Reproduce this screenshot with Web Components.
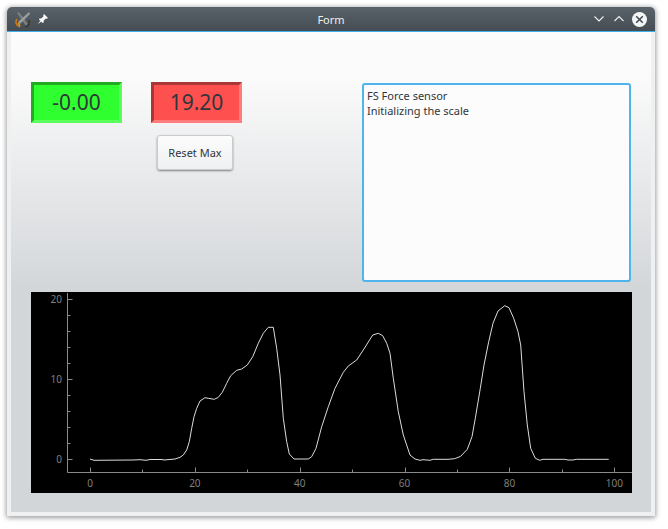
<!DOCTYPE html>
<html>
<head>
<meta charset="utf-8">
<title>Form</title>
<style>
  html, body { margin: 0; padding: 0; background: #fff; height: 100%; overflow: hidden; }
  body { padding: 7px 0 0 7px; box-sizing: border-box; font-family: "Noto Sans", sans-serif; }
</style>
</head>
<body>
<form-window title-text="Form">
  <form-panel>
    <value-display slot="first" color="green">-0.00</value-display>
    <value-display slot="second" color="red">19.20</value-display>
    <push-button slot="action">Reset Max</push-button>
    <log-view slot="log">FS Force sensor
Initializing the scale</log-view>
    <force-plot slot="plot"></force-plot>
  </form-panel>
</form-window>

<script>
class FormWindow extends HTMLElement {
  connectedCallback() {
    const title = this.getAttribute('title-text') || '';
    this.attachShadow({ mode: 'open' }).innerHTML = `
      <style>
        :host {
          display: block;
          width: 648px;
          height: 509px;
          border-radius: 5px 5px 2px 2px;
          box-shadow: 0 1px 5px 1px rgba(0, 0, 0, 0.38);
        }
        /* the reference text is grayscale antialiased, a group opacity gets us that */
        .frame { display: flex; flex-direction: column; height: 100%; border-radius: inherit; overflow: hidden; opacity: 0.999; }
        .bar {
          flex: none;
          height: 24px;
          display: grid;
          grid-template-columns: 1fr auto 1fr;
          align-items: center;
          background: linear-gradient(#5a636a, #454c53);
          border-bottom: 1px solid #3daee9;
          color: #eff0f1;
          font-size: 11px;
        }
        .left { display: flex; align-items: center; gap: 6px; padding-left: 8px; }
        .right { display: flex; align-items: center; justify-content: flex-end; gap: 7px; padding-right: 8px; }
        .down { margin-right: 1px; }
        svg { display: block; }
        .body { flex: 1; min-height: 0; padding: 0 4px 4px; background: #eff0f1; }
      </style>
      <div class="frame">
        <div class="bar">
          <div class="left">
            <svg width="16" height="17" viewBox="0 0 16 17">
              <path d="M2 2 L4 1 L13 13 L11 15Z" fill="#7b7f80"/>
              <path d="M14 1 L15 3 L5 13 L3 11Z" fill="#9a9e9f"/>
              <path d="M2 8 C0 11 1 15 5 16" fill="none" stroke="#c97a18" stroke-width="1.6"/>
              <path d="M14 9 C15 12 14 15 10 16" fill="none" stroke="#3b3a30" stroke-width="1.8"/>
              <path d="M3 12 L5 15" stroke="#e0a020" stroke-width="1.4"/>
            </svg>
            <svg width="12" height="12" viewBox="0 0 12 12">
              <path d="M7 1 L11 5 L9.6 5.8 L8.8 5.4 L6.6 7.8 L6.6 9.6 L5.6 10 L2 6.4 L2.4 5.4 L4.2 5.4 L6.6 3.2 L6.2 2.4Z M3.4 7.6 L1 11 L4.4 8.6Z" fill="#fcfcfc"/>
            </svg>
          </div>
          <div class="title">${title}</div>
          <div class="right">
            <svg class="down" width="12" height="12" viewBox="0 0 12 12"><path d="M1.5 3.5 L6 8 L10.5 3.5" fill="none" stroke="#eff0f1" stroke-width="1.1"/></svg>
            <svg width="12" height="12" viewBox="0 0 12 12"><path d="M1.5 8 L6 3.5 L10.5 8" fill="none" stroke="#eff0f1" stroke-width="1.1"/></svg>
            <svg width="15" height="15" viewBox="0 0 15 15">
              <circle cx="7.5" cy="7.5" r="7.5" fill="#f4f5f5"/>
              <path d="M4.2 4.2 L10.8 10.8 M10.8 4.2 L4.2 10.8" stroke="#454c53" stroke-width="1.6"/>
            </svg>
          </div>
        </div>
        <div class="body"><slot></slot></div>
      </div>`;
  }
}

class FormPanel extends HTMLElement {
  connectedCallback() {
    this.attachShadow({ mode: 'open' }).innerHTML = `
      <style>
        :host {
          display: block;
          height: 100%;
          box-sizing: border-box;
          padding: 50px 19px 19px 20px;
          background: linear-gradient(#fcfcfc 0, #fafafa 50px, #d3d6d9 258px, #d3d6d9 100%);
        }
        .top {
          display: grid;
          grid-template-columns: 91px 91px 269px;
          column-gap: 29px;
          height: 210px;
        }
        .middle { display: flex; flex-direction: column; gap: 12px; align-items: flex-start; }
        .log { margin-left: 91px; margin-top: 1px; }
      </style>
      <div class="top">
        <div><slot name="first"></slot></div>
        <div class="middle"><slot name="second"></slot><slot name="action"></slot></div>
        <div class="log"><slot name="log"></slot></div>
      </div>
      <slot name="plot"></slot>`;
  }
}

class ValueDisplay extends HTMLElement {
  connectedCallback() {
    const colors = {
      green: ['#2fff2f', '#22ab22', '#5cff5c'],
      red: ['#ff5050', '#aa3636', '#ff7c7c']
    };
    const c = colors[this.getAttribute('color')] || colors.green;
    this.attachShadow({ mode: 'open' }).innerHTML = `
      <style>
        :host {
          display: flex;
          align-items: center;
          justify-content: center;
          box-sizing: border-box;
          width: 91px;
          height: 41px;
          background: ${c[0]};
          border: 3px solid;
          border-color: ${c[1]} ${c[2]} ${c[2]} ${c[1]};
          color: #31363b;
          font-size: 21px;
          line-height: 1;
        }
      </style>
      <slot></slot>`;
  }
}

class PushButton extends HTMLElement {
  connectedCallback() {
    this.attachShadow({ mode: 'open' }).innerHTML = `
      <style>
        :host {
          display: flex;
          align-items: center;
          justify-content: center;
          box-sizing: border-box;
          width: 76px;
          height: 35px;
          margin-left: 6px;
          background: linear-gradient(#fcfcfc, #eff0f1);
          border: 1px solid #c9cccd;
          border-radius: 3px;
          box-shadow: 0 1px 2px rgba(0, 0, 0, 0.45);
          color: #31363b;
          font-size: 11px;
        }
      </style>
      <slot></slot>`;
  }
}

class LogView extends HTMLElement {
  connectedCallback() {
    this.attachShadow({ mode: 'open' }).innerHTML = `
      <style>
        :host {
          display: block;
          box-sizing: border-box;
          width: 269px;
          height: 199px;
          padding: 3px 3px;
          background: #fcfcfc;
          border: 2px solid #4fb4ec;
          border-radius: 3px;
          color: #31363b;
          font-size: 11px;
          line-height: 15px;
        }
        div { white-space: pre-line; }
      </style>
      <div><slot></slot></div>`;
  }
}

// curve traced in page coordinates, shifted to the plot's corner when drawn
const TRACE = [[90,459],[94,460.3],[133,460],[140,459.7],[146,460.3],[150,459.5],[162,459.5],[164,460],[175,459],
  [180,457.3],[183.3,455],[186.7,450],[189.3,441.7],[191.7,428.3],[194,416.7],[196.7,408.3],[200,401],[205,397.7],
  [208.3,398.3],[214.3,399.3],[218.3,397.3],[222.3,392.3],[226.7,383.3],[230.7,375.7],[236.7,370.3],[241.7,369],
  [247.3,365],[252.7,356.7],[258.3,343.3],[263.3,333.3],[268.3,327.3],[273.3,327.3],[276.7,348.3],[280,375],
  [283.3,418.3],[286.7,441.7],[289.3,454],[294,459],[308.3,459],[311.7,456.7],[316,448.3],[321.7,426.7],
  [328.3,406.7],[335,388.3],[343.3,372.3],[348.3,366],[356.7,360],[363.3,350],[372.7,335],[378.3,333.3],
  [382.7,335.7],[386.7,343.3],[390,353.3],[393.3,378.3],[398.3,411.7],[403.3,435],[410,455],[415,459],
  [420,460.3],[423,459.7],[430,460.3],[433.3,459.3],[448,459.3],[454.7,458.7],[460.7,456.3],[467.3,449.3],
  [472,436.7],[475.3,418.3],[480.3,388.3],[484,365],[488.7,341.7],[493,323.3],[498,311],[504.7,305.7],
  [509,307.7],[513.7,318.3],[518,331.7],[520.7,345],[524,391.7],[527.3,425],[530.7,448.3],[535.3,458.3],
  [539.7,460.3],[543,459.3],[564.7,459.3],[568,460],[573,460],[576.3,459.3],[608.7,459.3]];

class ForcePlot extends HTMLElement {
  connectedCallback() {
    const ox = 31, oy = 292;
    const pts = TRACE.map(p => `${(p[0] - ox).toFixed(1)},${(p[1] - oy).toFixed(1)}`).join(' ');
    const axisX = 36.5, axisY = 180.5;
    const xAt = v => 59 + v * 5.243;
    const yAt = v => 167 - v * 8;
    let ticks = '';
    let labels = '';
    for (let v = 0; v <= 100; v += 10) {
      const x = Math.round(xAt(v)) + 0.5;
      const len = v % 20 === 0 ? 5 : 3;
      ticks += `M${x} ${axisY}V${axisY - len}`;
    }
    for (let v = 0; v <= 20; v += 2) {
      const y = Math.round(yAt(v)) + 0.5;
      const len = v % 10 === 0 ? 5 : 3;
      ticks += `M${axisX} ${y}H${axisX + len}`;
    }
    for (const v of [0, 20, 40, 60, 80, 100]) {
      labels += `<text x="${xAt(v)}" y="195" text-anchor="middle">${v}</text>`;
    }
    for (const v of [0, 10, 20]) {
      labels += `<text x="31" y="${yAt(v) + 3.5}" text-anchor="end">${v}</text>`;
    }
    this.attachShadow({ mode: 'open' }).innerHTML = `
      <style>
        :host { display: block; width: 601px; height: 201px; background: #000; }
        svg { display: block; }
        text { font-family: "Noto Sans", sans-serif; font-size: 10px; fill: #7f7f7f; }
      </style>
      <svg width="601" height="201" viewBox="0 0 601 201">
        <path d="M${axisX} 1V${axisY}H601${ticks}" fill="none" stroke="#8a8a8a" stroke-width="1"/>
        ${labels}
        <polyline points="${pts}" fill="none" stroke="#dcdcdc" stroke-width="1"/>
      </svg>`;
  }
}

customElements.define('form-window', FormWindow);
customElements.define('form-panel', FormPanel);
customElements.define('value-display', ValueDisplay);
customElements.define('push-button', PushButton);
customElements.define('log-view', LogView);
customElements.define('force-plot', ForcePlot);
</script>
</body>
</html>
